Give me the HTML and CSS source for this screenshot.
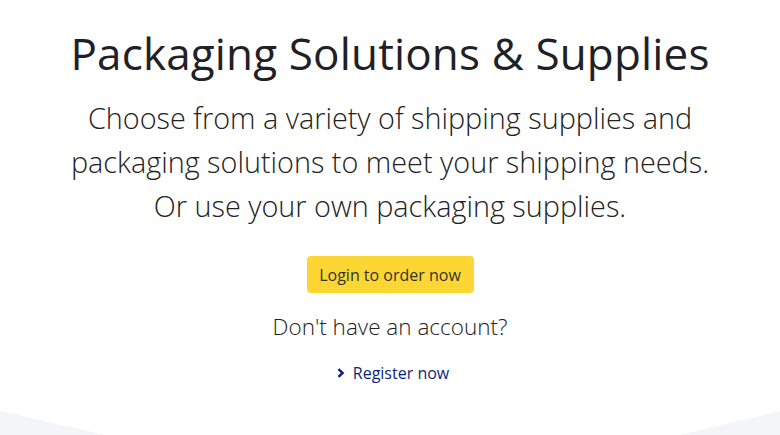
FILE: index.html
```html
<!DOCTYPE html>
<html lang="en">
<head>
<meta charset="utf-8">
<title>Packaging Solutions &amp; Supplies</title>
<link rel="stylesheet" href="styles.css">
</head>
<body>
<main class="hero">
  <h1 class="title">Packaging Solutions &amp; Supplies</h1>
  <p class="lead">Choose from a variety of shipping supplies and packaging solutions to meet your shipping needs. Or use your own packaging supplies.</p>
  <a class="btn" href="#">Login to order now</a>
  <p class="question">Don't have an account?</p>
  <a class="link" href="#"><svg class="chev" width="8" height="10" viewBox="0 0 8 10"><path d="M1.5 1.2 L5.6 5 L1.5 8.8" fill="none" stroke="#0d1f7c" stroke-width="2.4"/></svg>Register now</a>
</main>
<div class="footer-band"><span class="corner left"></span><span class="corner right"></span></div>
</body>
</html>
```
FILE: styles.css
```css
html, body {
  margin: 0;
  padding: 0;
  background: #fff;
}
body {
  width: 780px;
  height: 435px;
  overflow: hidden;
  display: flex;
  flex-direction: column;
  font-family: "Open Sans", "Liberation Sans", sans-serif;
  color: #222;
}
.hero {
  flex: 1;
  display: flex;
  flex-direction: column;
  align-items: center;
  text-align: center;
}
.title {
  margin: 23px 0 0;
  font-size: 44px;
  font-weight: 400;
  line-height: 60px;
  color: #1f2126;
  letter-spacing: 0.15px;
}
.lead {
  margin: 13px 0 0;
  width: 650px;
  font-size: 28.8px;
  font-weight: 300;
  line-height: 44px;
  color: #222;
}
.btn {
  margin-top: 28px;
  display: inline-flex;
  align-items: center;
  justify-content: center;
  width: 167px;
  height: 37px;
  background: #fcd734;
  border-radius: 4px;
  font-size: 16px;
  color: #333;
  text-decoration: none;
}
.question {
  margin: 19px 0 0;
  font-size: 22.5px;
  font-weight: 300;
  line-height: 30px;
  color: #222;
}
.link {
  margin-top: 21px;
  display: inline-flex;
  align-items: center;
  gap: 8px;
  font-size: 16px;
  line-height: 20px;
  color: #0d1f7c;
  text-decoration: none;
  margin-left: 6px;
}
.chev {
  display: block;
}
.footer-band {
  height: 24px;
  display: flex;
  justify-content: space-between;
}
.corner {
  display: block;
  height: 24px;
}
.corner.left {
  width: 105px;
  background: linear-gradient(to top right, #f4f5f8 50%, transparent 50%);
}
.corner.right {
  width: 100px;
  background: linear-gradient(to top left, #f4f5f8 50%, transparent 50%);
}
```
